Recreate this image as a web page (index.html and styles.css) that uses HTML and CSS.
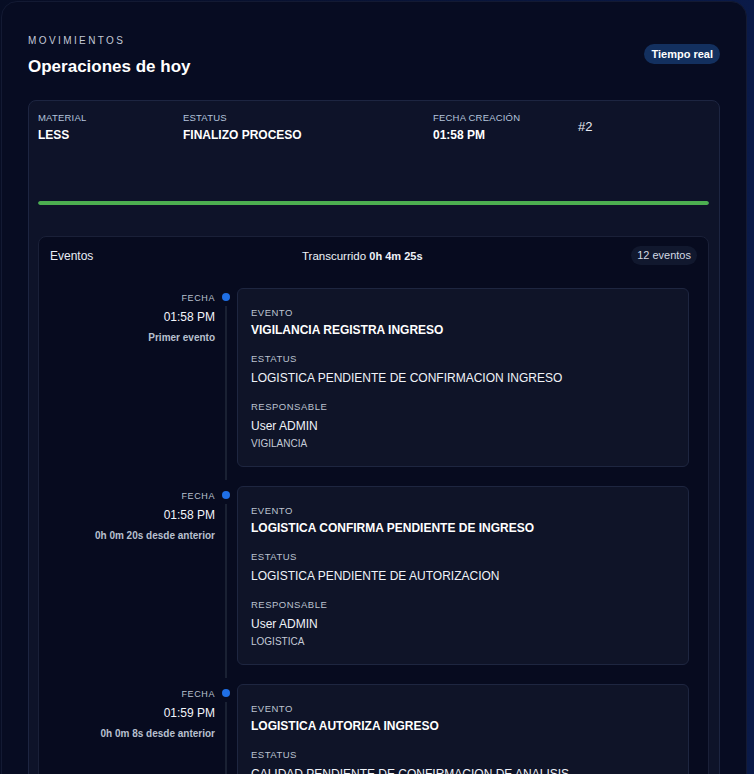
FILE: index.html
```html
<!DOCTYPE html>
<html lang="es">
<head>
<meta charset="utf-8">
<title>Movimientos</title>
<link rel="stylesheet" href="styles.css">
</head>
<body>
<section class="panel">
  <header class="panel-head">
    <div>
      <div class="eyebrow">MOVIMIENTOS</div>
      <h1 class="title">Operaciones de hoy</h1>
    </div>
    <span class="badge">Tiempo real</span>
  </header>

  <article class="op-card">
    <div class="op-grid">
      <div class="field">
        <div class="field-label">MATERIAL</div>
        <div class="field-value">LESS</div>
      </div>
      <div class="field">
        <div class="field-label">ESTATUS</div>
        <div class="field-value">FINALIZO PROCESO</div>
      </div>
      <div class="field">
        <div class="field-label">FECHA CREACIÓN</div>
        <div class="field-value">01:58 PM</div>
      </div>
      <div class="op-id">#2</div>
    </div>

    <div class="progress"><div class="progress-fill" style="width:100%"></div></div>

    <div class="events">
      <div class="events-head">
        <span class="events-title">Eventos</span>
        <span class="elapsed">Transcurrido <b>0h 4m 25s</b></span>
        <span class="count">12 eventos</span>
      </div>

      <ol class="timeline">
        <li class="tl-item">
          <div class="tl-when">
            <div class="tl-label">FECHA</div>
            <div class="tl-time">01:58 PM</div>
            <div class="tl-delta">Primer evento</div>
          </div>
          <div class="tl-rail"><span class="tl-dot"></span><span class="tl-line"></span></div>
          <div class="ev-card">
            <div class="ev-label">EVENTO</div>
            <div class="ev-title">VIGILANCIA REGISTRA INGRESO</div>
            <div class="ev-label">ESTATUS</div>
            <div class="ev-text">LOGISTICA PENDIENTE DE CONFIRMACION INGRESO</div>
            <div class="ev-label">RESPONSABLE</div>
            <div class="ev-text">User ADMIN</div>
            <div class="ev-area">VIGILANCIA</div>
          </div>
        </li>
        <li class="tl-item">
          <div class="tl-when">
            <div class="tl-label">FECHA</div>
            <div class="tl-time">01:58 PM</div>
            <div class="tl-delta">0h 0m 20s desde anterior</div>
          </div>
          <div class="tl-rail"><span class="tl-dot"></span><span class="tl-line"></span></div>
          <div class="ev-card">
            <div class="ev-label">EVENTO</div>
            <div class="ev-title">LOGISTICA CONFIRMA PENDIENTE DE INGRESO</div>
            <div class="ev-label">ESTATUS</div>
            <div class="ev-text">LOGISTICA PENDIENTE DE AUTORIZACION</div>
            <div class="ev-label">RESPONSABLE</div>
            <div class="ev-text">User ADMIN</div>
            <div class="ev-area">LOGISTICA</div>
          </div>
        </li>
        <li class="tl-item">
          <div class="tl-when">
            <div class="tl-label">FECHA</div>
            <div class="tl-time">01:59 PM</div>
            <div class="tl-delta">0h 0m 8s desde anterior</div>
          </div>
          <div class="tl-rail"><span class="tl-dot"></span><span class="tl-line"></span></div>
          <div class="ev-card">
            <div class="ev-label">EVENTO</div>
            <div class="ev-title">LOGISTICA AUTORIZA INGRESO</div>
            <div class="ev-label">ESTATUS</div>
            <div class="ev-text">CALIDAD PENDIENTE DE CONFIRMACION DE ANALISIS</div>
            <div class="ev-label">RESPONSABLE</div>
            <div class="ev-text">User ADMIN</div>
            <div class="ev-area">LOGISTICA</div>
          </div>
        </li>
      </ol>
    </div>
  </article>
</section>
</body>
</html>
```

FILE: styles.css
```css
html {
  overflow: hidden;
  background: #0a1a46;
}
body {
  margin: 0;
  padding: 1px 7px 0 1px;
  font-family: "Liberation Sans", Arial, sans-serif;
  color: #eef2f8;
  background: linear-gradient(90deg, #070d24 0%, #0a1a48 100%);
  min-height: 773px;
}
.panel {
  background: #070c22;
  border: 1px solid #131a33;
  border-radius: 16px;
  padding: 33px 26px 0 26px;
  min-height: 760px;
}
.panel-head {
  display: flex;
  justify-content: space-between;
  align-items: flex-start;
}
.eyebrow {
  font-size: 10px;
  letter-spacing: 2.4px;
  color: #c3c9d6;
  line-height: 12px;
}
.title {
  margin: 9px 0 0;
  font-size: 17px;
  font-weight: 700;
  color: #ffffff;
  line-height: 22px;
}
.badge {
  margin-top: 9px;
  background: #13305f;
  color: #ffffff;
  font-size: 11px;
  font-weight: 700;
  line-height: 14px;
  padding: 3px 7px;
  border-radius: 10px;
}
.op-card {
  margin-top: 22px;
  background: #0e1329;
  border: 1px solid #1d2541;
  border-radius: 8px;
  padding: 11px 10px 0 9px;
}
.op-grid {
  display: grid;
  grid-template-columns: 145px 250px 145px 1fr;
  align-items: start;
}
.field-label {
  font-size: 9.5px;
  color: #b4c4dc;
  line-height: 11px;
  letter-spacing: 0.2px;
}
.field-value {
  margin-top: 5px;
  font-size: 12px;
  font-weight: 700;
  color: #ffffff;
  line-height: 15px;
}
.op-id {
  align-self: center;
  font-size: 13px;
  color: #e6eaf2;
  line-height: 16px;
  margin-top: -2px;
}
.progress {
  margin-top: 58px;
  height: 4px;
  background: #1b2540;
  border-radius: 3px;
  overflow: hidden;
}
.progress-fill {
  height: 100%;
  background: #4caf50;
  border-radius: 3px;
}
.events {
  margin-top: 31px;
  background: #070b1f;
  border: 1px solid #1a2038;
  border-radius: 8px;
  padding: 9px 11px 0 11px;
}
.events-head {
  display: flex;
  justify-content: space-between;
  align-items: center;
}
.events-title {
  font-size: 12px;
  color: #e8edf5;
}
.elapsed {
  font-size: 11.5px;
  color: #eef2f8;
}
.elapsed b {
  font-size: 11px;
}
.count {
  background: #11182e;
  color: #d3d9e4;
  font-size: 11px;
  line-height: 15px;
  padding: 2px 6px;
  border-radius: 10px;
}
.timeline {
  list-style: none;
  margin: 23px 0 0;
  padding: 0 8px 0 0;
}
.tl-item {
  display: grid;
  grid-template-columns: 165px 22px 1fr;
  padding-bottom: 19px;
}
.tl-when {
  text-align: right;
  padding-top: 5px;
}
.tl-label {
  font-size: 9px;
  letter-spacing: 0.6px;
  color: #b9c0cd;
  line-height: 11px;
}
.tl-time {
  margin-top: 6px;
  font-size: 12px;
  color: #f2f5fa;
  line-height: 15px;
}
.tl-delta {
  margin-top: 6px;
  font-size: 10px;
  font-weight: 700;
  color: #b8c0cf;
  line-height: 13px;
}
.tl-rail {
  display: flex;
  flex-direction: column;
  align-items: center;
  padding-top: 5px;
  margin-bottom: -13px;
}
.tl-dot {
  width: 8px;
  height: 8px;
  border-radius: 50%;
  background: #1f6fe5;
}
.tl-line {
  flex: 1;
  width: 2px;
  margin-top: 5px;
  background: #1a2133;
}
.ev-card {
  background: #0f1428;
  border: 1px solid #1e2640;
  border-radius: 6px;
  padding: 18px 13px 16px;
}
.ev-label {
  font-size: 9.5px;
  letter-spacing: 0.5px;
  color: #bcc3d0;
  line-height: 11px;
  margin-top: 15px;
}
.ev-label:first-child {
  margin-top: 0;
}
.ev-title {
  margin-top: 5px;
  font-size: 12px;
  font-weight: 700;
  color: #ffffff;
  line-height: 15px;
}
.ev-text {
  margin-top: 7px;
  font-size: 12px;
  color: #f0f3f8;
  line-height: 15px;
}
.ev-area {
  margin-top: 3px;
  font-size: 10px;
  color: #c4cad6;
  line-height: 13px;
}
```
